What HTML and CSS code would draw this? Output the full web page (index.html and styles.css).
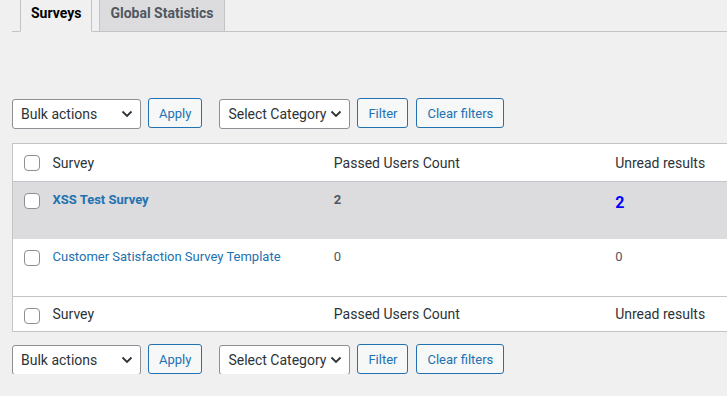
FILE: index.html
```html
<!DOCTYPE html>
<html lang="en">

<head>
    <meta charset="UTF-8">
    <meta name="viewport" content="width=device-width, initial-scale=1.0">
    <title>Surveys</title>
    <link rel="stylesheet" href="styles.css">
</head>

<body>
    <div class="wrap">
        <nav class="nav-tabs">
            <a class="nav-tab active" href="#">Surveys</a>
            <a class="nav-tab" href="#">Global Statistics</a>
        </nav>

        <div class="tablenav top">
            <div class="select bulk"><span>Bulk actions</span>
                <svg width="12" height="8" viewBox="0 0 12 8"><polyline points="1.5,1.5 6,6 10.5,1.5" fill="none" stroke="#2c3338" stroke-width="1.8"/></svg>
            </div>
            <button class="button">Apply</button>
            <div class="select category"><span>Select Category</span>
                <svg width="12" height="8" viewBox="0 0 12 8"><polyline points="1.5,1.5 6,6 10.5,1.5" fill="none" stroke="#2c3338" stroke-width="1.8"/></svg>
            </div>
            <button class="button">Filter</button>
            <button class="button">Clear filters</button>
        </div>

        <table class="list-table">
            <colgroup>
                <col class="col-check">
                <col class="col-wide">
                <col class="col-wide">
                <col class="col-wide">
            </colgroup>
            <thead>
                <tr>
                    <td class="check-column"><span class="checkbox"></span></td>
                    <th>Survey</th>
                    <th>Passed Users Count</th>
                    <th>Unread results</th>
                </tr>
            </thead>
            <tbody>
                <tr class="unread">
                    <td class="check-column"><span class="checkbox"></span></td>
                    <td><a href="#" class="title strong">XSS Test Survey</a></td>
                    <td><b>2</b></td>
                    <td><span class="unread-count">2</span></td>
                </tr>
                <tr>
                    <td class="check-column"><span class="checkbox"></span></td>
                    <td><a href="#" class="title">Customer Satisfaction Survey Template</a></td>
                    <td>0</td>
                    <td>0</td>
                </tr>
            </tbody>
            <tfoot>
                <tr>
                    <td class="check-column"><span class="checkbox"></span></td>
                    <th>Survey</th>
                    <th>Passed Users Count</th>
                    <th>Unread results</th>
                </tr>
            </tfoot>
        </table>

        <div class="tablenav bottom">
            <div class="select bulk"><span>Bulk actions</span>
                <svg width="12" height="8" viewBox="0 0 12 8"><polyline points="1.5,1.5 6,6 10.5,1.5" fill="none" stroke="#2c3338" stroke-width="1.8"/></svg>
            </div>
            <button class="button">Apply</button>
            <div class="select category"><span>Select Category</span>
                <svg width="12" height="8" viewBox="0 0 12 8"><polyline points="1.5,1.5 6,6 10.5,1.5" fill="none" stroke="#2c3338" stroke-width="1.8"/></svg>
            </div>
            <button class="button">Filter</button>
            <button class="button">Clear filters</button>
        </div>
    </div>
</body>

</html>
```

FILE: styles.css
```css
html, body {
    margin: 0;
    background-color: #f0f0f1;
    font-family: Roboto, "Liberation Sans", sans-serif;
    color: #50575e;
    overflow: hidden;
}

.wrap {
    padding-left: 12px;
    overflow: hidden;
}

.nav-tabs {
    display: flex;
    gap: 7px;
    margin-top: -4px;
    padding-left: 8px;
    border-bottom: 1px solid #c3c4c7;
}

.nav-tab {
    padding: 4px 10px 6px;
    line-height: 24px;
    font-size: 14px;
    font-weight: 700;
    color: #50575e;
    text-decoration: none;
    background-color: #dcdcde;
    border: 1px solid #c3c4c7;
    margin-bottom: -1px;
}

.nav-tab.active {
    color: #000;
    background-color: #f0f0f1;
    border-bottom-color: #f0f0f1;
}

.tablenav {
    display: flex;
    align-items: center;
    height: 30px;
}

.tablenav.top {
    margin-top: 66px;
    margin-bottom: 15px;
}

.tablenav.bottom {
    margin-top: 12px;
}

.select {
    box-sizing: border-box;
    height: 30px;
    display: flex;
    align-items: center;
    justify-content: space-between;
    padding: 0 7px 0 8px;
    background-color: #fff;
    border: 1px solid #8c8f94;
    border-radius: 3px;
    font-size: 14px;
    color: #2c3338;
    margin-top: 1px;
}

.select.bulk {
    width: 129px;
}

.select.category {
    width: 131px;
    margin-left: 17px;
}

.button {
    box-sizing: border-box;
    height: 30px;
    margin-left: 7px;
    padding: 0 10px;
    font-family: Roboto, "Liberation Sans", sans-serif;
    font-size: 13px;
    color: #2271b1;
    background-color: #f6f7f7;
    border: 1px solid #2271b1;
    border-radius: 3px;
    cursor: pointer;
}

.button + .button {
    margin-left: 8px;
}

.list-table {
    table-layout: fixed;
    width: 875px;
    border-collapse: collapse;
    background-color: #fff;
    border: 1px solid #c3c4c7;
}

.col-check {
    width: 30px;
}

.col-wide {
    width: 281px;
}

.list-table th {
    text-align: left;
    font-weight: 400;
    font-size: 14px;
    line-height: 20px;
    color: #2c3338;
    padding: 9px 10px 8px;
}

thead tr {
    border-bottom: 1px solid #c3c4c7;
}

tfoot tr {
    border-top: 1px solid #c3c4c7;
}

.list-table tfoot th {
    padding: 7px 10px;
}

.list-table td {
    vertical-align: top;
    font-size: 13px;
    line-height: 19.5px;
    padding: 8px 10px 0;
    height: 49px;
}

.list-table .check-column {
    padding: 11px 0 0 11px;
    height: auto;
}

thead .check-column {
    padding-top: 13px;
}

tbody tr.unread {
    background-color: #dcdcde;
}

.checkbox {
    display: block;
    box-sizing: border-box;
    width: 16px;
    height: 16px;
    background-color: #fff;
    border: 1px solid #8c8f94;
    border-radius: 4px;
}

.title {
    color: #2271b1;
    text-decoration: none;
}

.title.strong {
    font-weight: 700;
}

.unread-count {
    display: block;
    font-size: 16px;
    font-weight: 700;
    line-height: 26px;
    color: #0000ff;
}
```
